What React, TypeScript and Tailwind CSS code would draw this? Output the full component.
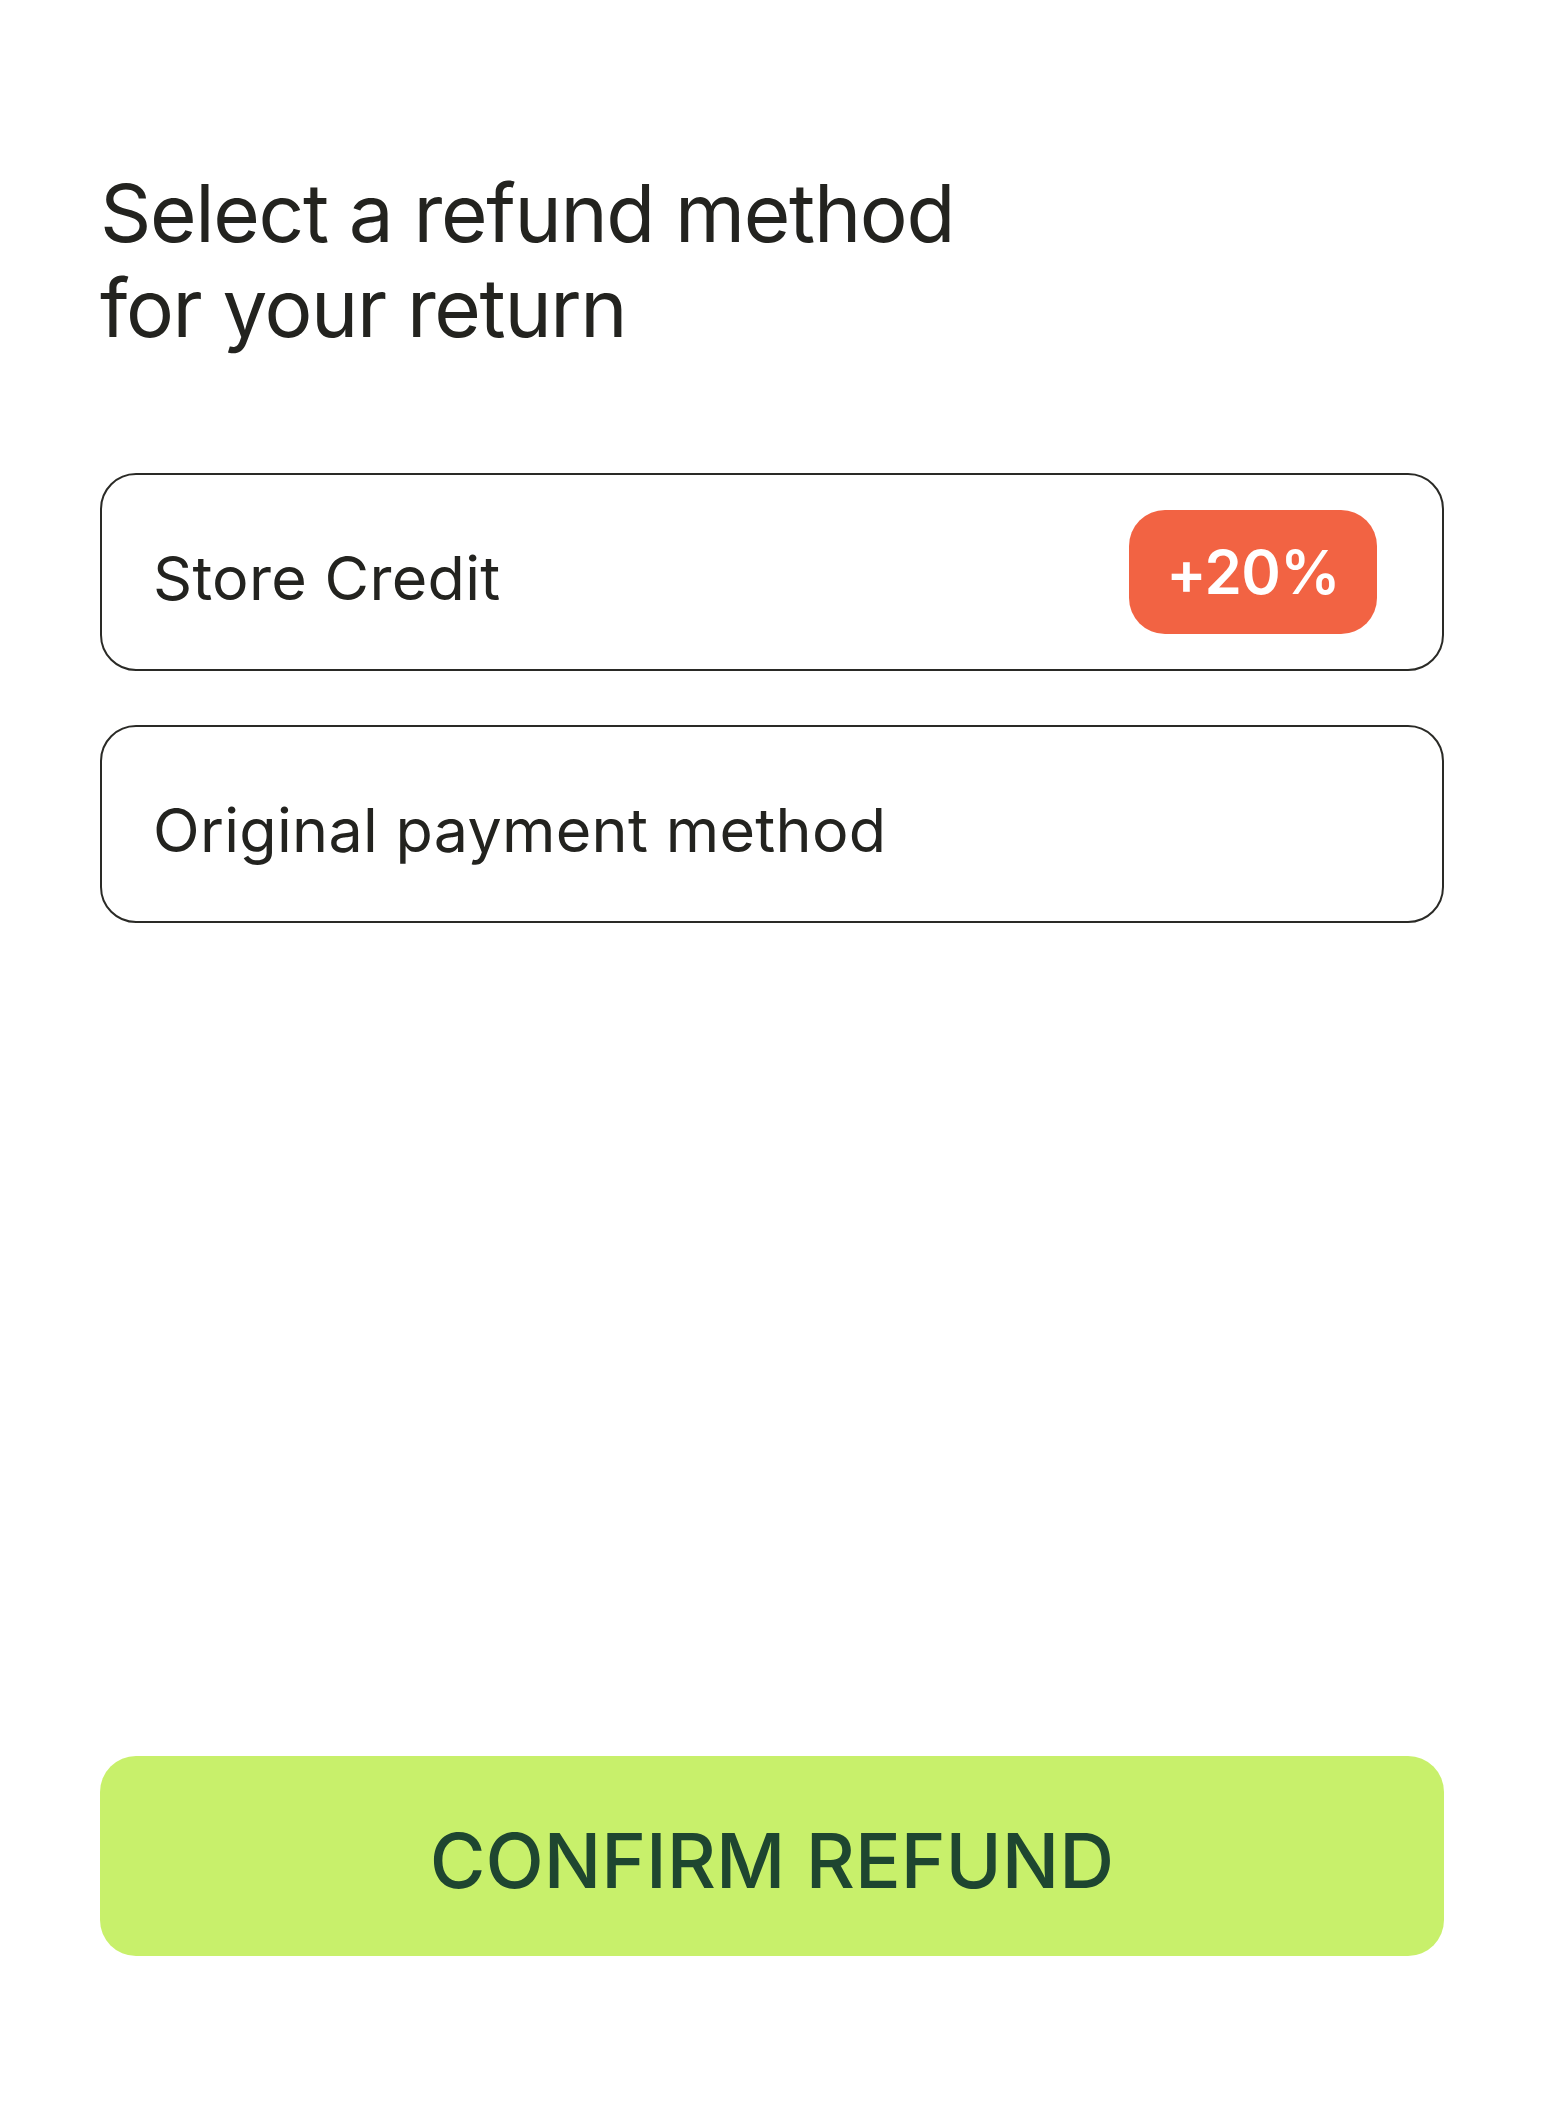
import { useState } from "react";

const methods = [
    { id: "store", label: "Store Credit", badge: "+20%" },
    { id: "original", label: "Original payment method" },
];

export default function App() {
    const [selected, setSelected] = useState<string | null>(null);

    return (
        <div className="min-h-screen bg-white flex flex-col px-[100px] pt-[165px] pb-[164px] text-[#23231f]" style={{ fontFamily: "Inter, 'Noto Sans', sans-serif" }}>
            <h1 className="text-[80px] leading-[95px] font-normal tracking-[-0.017em]">
                Select a refund method
                <br />
                for your return
            </h1>

            <div className="mt-[118px] flex flex-col gap-[54px]">
                {methods.map((m) => (
                    <button
                        key={m.id}
                        onClick={() => setSelected(m.id)}
                        className={`h-[198px] w-full rounded-[36px] border-2 border-[#2a2a26] bg-white flex items-center justify-between pl-[51px] pr-[65px] text-left ${selected === m.id ? "ring-2 ring-[#23231f]" : ""}`}
                    >
                        <span className="text-[61px] leading-none pt-3 tracking-[0.005em]">{m.label}</span>
                        {m.badge && (
                            <span className="h-[124px] w-[248px] rounded-[36px] bg-[#f26343] text-white text-[60px] font-semibold flex items-center justify-center tracking-[-0.01em]">
                                {m.badge}
                            </span>
                        )}
                    </button>
                ))}
            </div>

            <button className="mt-auto h-[200px] w-full rounded-[36px] bg-[#c8f06b] text-[#1e4630] text-[76px] font-medium flex items-center justify-center pt-2">
                CONFIRM REFUND
            </button>
        </div>
    );
}
